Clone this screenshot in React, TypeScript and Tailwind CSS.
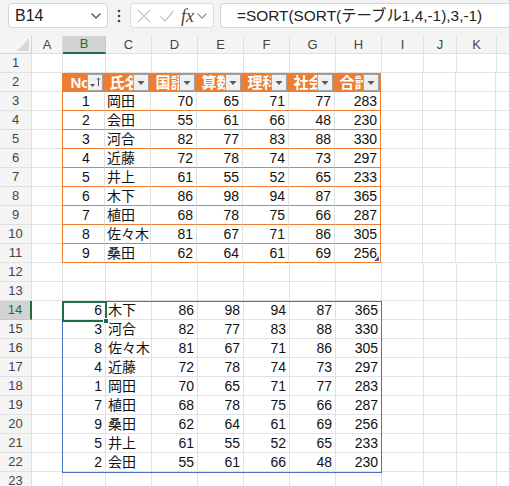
import type { ReactNode } from "react";

type Row = [number, string, number, number, number, number, number];

const TABLE: Row[] = [
  [1, "岡田", 70, 65, 71, 77, 283],
  [2, "会田", 55, 61, 66, 48, 230],
  [3, "河合", 82, 77, 83, 88, 330],
  [4, "近藤", 72, 78, 74, 73, 297],
  [5, "井上", 61, 55, 52, 65, 233],
  [6, "木下", 86, 98, 94, 87, 365],
  [7, "植田", 68, 78, 75, 66, 287],
  [8, "佐々木", 81, 67, 71, 86, 305],
  [9, "桑田", 62, 64, 61, 69, 256],
];

const SORTED = [6, 3, 8, 4, 1, 7, 9, 5, 2].map((n) => TABLE[n - 1]);

const HEADERS = ["No", "氏名", "国語", "算数", "理科", "社会", "合計"];

// column widths: A..L (row header handled separately); L is only a sliver at the edge
const COLS = [
  { id: "A", w: "w-[31px]" },
  { id: "B", w: "w-[43px]" },
  { id: "C", w: "w-[46px]" },
  { id: "D", w: "w-[46px]" },
  { id: "E", w: "w-[46px]" },
  { id: "F", w: "w-[46px]" },
  { id: "G", w: "w-[46px]" },
  { id: "H", w: "w-[46px]" },
  { id: "I", w: "w-[42px]" },
  { id: "J", w: "w-[33px]" },
  { id: "K", w: "w-[40px]" },
  { id: "", w: "w-[40px]" },
];

const FONT = { fontFamily: '"Liberation Sans", "Noto Sans CJK JP", sans-serif' };

function FilterButton({ sorted }: { sorted?: boolean }) {
  return (
    <span className="absolute right-[1px] top-[1px] flex h-[17px] w-[16px] items-center justify-center border border-[#a3a3a3] bg-[#f0f0f0]">
      <svg width="14" height="15" viewBox="0 0 14 15">
        {sorted ? (
          <>
            <path d="M2 9h5l-2.5 3z" fill="#555" />
            <path d="M10.5 3v8M9 4.5l1.5-1.5 1.5 1.5" stroke="#555" strokeWidth="1" fill="none" />
          </>
        ) : (
          <path d="M3.5 6h7l-3.5 4z" fill="#555" />
        )}
      </svg>
    </span>
  );
}

function Cell({
  w,
  className = "",
  children,
}: {
  w: string;
  className?: string;
  children?: ReactNode;
}) {
  return (
    <div
      className={`relative flex h-[19px] shrink-0 items-center overflow-hidden border-b border-r border-[#e1e1e1] text-[14px] leading-none text-[#111] ${w} ${className}`}
    >
      {children}
    </div>
  );
}

function renderCells(r: number) {
  const inTable = r >= 2 && r <= 11;
  const tableData = r >= 3 && r <= 11 ? TABLE[r - 3] : null;
  const spill = r >= 14 && r <= 22 ? SORTED[r - 14] : null;

  return COLS.map((c, ci) => {
    const dataIdx = ci - 1; // B = 0
    const inCols = dataIdx >= 0 && dataIdx <= 6;
    let cls = "";
    let content: ReactNode = null;

    if (inTable && inCols) {
      if (r === 2) {
        cls = "bg-[#ed7d31] justify-center font-bold text-white border-b-[#ed7d31]";
        if (dataIdx < 6) cls += " border-r-[#ed7d31]";
        content = (
          <>
            <span className="pr-[6px] text-[15px] text-white">{HEADERS[dataIdx]}</span>
            <FilterButton sorted={dataIdx === 0} />
          </>
        );
      } else if (tableData) {
        cls = "border-b-[#ed7d31]";
        const v = tableData[dataIdx];
        if (dataIdx === 0) {
          cls += " justify-center pl-[5px]";
        } else if (dataIdx === 1) {
          cls += " justify-start pl-[2px] whitespace-nowrap";
        } else {
          cls += " justify-end pr-[3px]";
        }
        content = v;
      }
      if (dataIdx === 0) cls += " border-l border-l-[#ed7d31] -ml-px";
      if (dataIdx === 6) cls += " border-r-[#ed7d31]";
    } else if (spill && inCols) {
      const v = spill[dataIdx];
      cls = dataIdx === 1 ? "justify-start pl-[2px] whitespace-nowrap" : "justify-end pr-[3px]";
      content = v;
    }

    return (
      <Cell key={ci} w={c.w} className={cls}>
        {content}
        {r === 11 && dataIdx === 6 && (
          <svg className="absolute bottom-[1px] right-[1px]" width="5" height="5" viewBox="0 0 5 5">
            <path d="M5 0v5H0z" fill="#4a64a8" />
          </svg>
        )}
      </Cell>
    );
  });
}

function Chevron({ color = "#555" }: { color?: string }) {
  return (
    <svg width="12" height="8" viewBox="0 0 12 8">
      <path d="M1.5 1.5l4.5 4.5 4.5-4.5" stroke={color} strokeWidth="1.3" fill="none" />
    </svg>
  );
}

export default function App() {
  const rows = Array.from({ length: 23 }, (_, i) => i + 1);

  return (
    <div className="relative h-[486px] w-[509px] overflow-hidden bg-white" style={FONT}>
      {/* formula bar */}
      <div className="flex h-[36px] items-start gap-0 bg-[#f3f3f3] pl-[8px] pt-[3px]">
        <div className="flex h-[25px] w-[100px] items-center justify-between rounded-[4px] border border-[#d4d4d4] bg-white pl-[6px] pr-[5px] text-[16px] text-[#222]">
          <span>B14</span>
          <Chevron />
        </div>
        <div className="flex h-[25px] w-[22px] items-center justify-center">
          <svg width="4" height="14" viewBox="0 0 4 14">
            <circle cx="2" cy="2" r="1.3" fill="#444" />
            <circle cx="2" cy="7" r="1.3" fill="#444" />
            <circle cx="2" cy="12" r="1.3" fill="#444" />
          </svg>
        </div>
        <div className="flex h-[25px] w-[84px] items-center rounded-[4px] border border-[#dcdcdc] bg-white pl-[5px]">
          <svg width="16" height="16" viewBox="0 0 16 16">
            <path d="M2 2l12 12M14 2L2 14" stroke="#c4c4c4" strokeWidth="1.2" />
          </svg>
          <svg className="ml-[7px]" width="16" height="16" viewBox="0 0 16 16">
            <path d="M1.5 8.5l4.5 4.5 8.5-10" stroke="#c4c4c4" strokeWidth="1.2" fill="none" />
          </svg>
          <span
            className="ml-[6px] text-[18px] italic leading-none text-[#444]"
            style={{ fontFamily: '"Liberation Serif", serif' }}
          >
            fx
          </span>
          <span className="ml-[2px] flex">
            <Chevron color="#999" />
          </span>
        </div>
        <div className="ml-[6px] flex h-[25px] flex-1 items-center rounded-l-[4px] border border-r-0 border-[#d4d4d4] bg-white pl-[16px] text-[15.4px] whitespace-nowrap text-[#222]">
          =SORT(SORT(テーブル1,4,-1),3,-1)
        </div>
      </div>

      {/* column headers */}
      <div className="flex h-[18px] bg-[#f5f5f5]">
        <div className="relative h-[18px] w-[32px] shrink-0 border-r border-b border-[#d5d5d5]">
          <svg className="absolute bottom-[2px] right-[2px]" width="12" height="13" viewBox="0 0 12 13">
            <path d="M12 0v13H0z" fill="#d8d8d8" />
          </svg>
        </div>
        {COLS.map((c, ci) => (
          <div
            key={ci}
            className={`flex h-[18px] shrink-0 items-center justify-center border-r text-[13px] ${c.w} ${
              c.id === "B"
                ? "border-b-2 border-b-[#1e6e42] border-r-[#c8c8c8] bg-[#d3d3d3] text-[#1e6e42]"
                : "border-b border-[#e0e0e0] text-[#444]"
            }`}
          >
            {c.id}
          </div>
        ))}
      </div>

      {/* grid */}
      <div className="relative">
        {rows.map((r) => (
          <div key={r} className="flex">
            <div
              className={`flex h-[19px] w-[32px] shrink-0 items-center justify-center border-b text-[13px] ${
                r === 14
                  ? "border-r-2 border-r-[#1e6e42] border-b-[#c8c8c8] bg-[#d3d3d3] text-[#1e6e42]"
                  : "border-r border-[#e0e0e0] bg-[#f5f5f5] text-[#444]"
              }`}
            >
              {r}
            </div>
            {renderCells(r)}
          </div>
        ))}

        {/* spill range outline */}
        <div className="pointer-events-none absolute left-[62px] top-[247px] h-[172px] w-[320px] border border-[#4472c4]" />
        {/* active cell */}
        <div className="pointer-events-none absolute left-[62px] top-[247px] h-[21px] w-[45px] border-2 border-[#1e6e42]" />
        <div className="pointer-events-none absolute left-[103px] top-[264px] h-[6px] w-[6px] border border-white bg-[#1e6e42]" />
      </div>
    </div>
  );
}
